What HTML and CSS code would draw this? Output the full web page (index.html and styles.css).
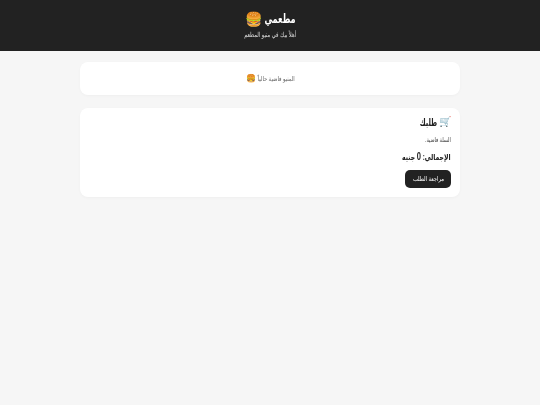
FILE: index.html
```html
<!DOCTYPE html>
<html lang="ar" dir="rtl">
<head>
<meta charset="utf-8">
<title>مطعمي</title>
<link rel="stylesheet" href="styles.css">
</head>
<body>
<header class="site-header">
  <h1 class="brand"><span class="squeeze brand-name">مطعمي</span><span class="emoji-lg">🍔</span></h1>
  <p class="tagline"><span class="squeeze">أهلاً بيك في منيو المطعم</span></p>
</header>
<main class="container">
  <section class="card menu-card">
    <p class="empty-menu"><span class="squeeze menu-text">المنيو فاضية حالياً</span><span class="emoji-sm">🍔</span></p>
  </section>
  <section class="card cart-card">
    <h2 class="cart-title"><span class="emoji-md">🛒</span><span class="squeeze cart-name">طلبك</span></h2>
    <p class="cart-empty"><span class="squeeze from-right">السلة فاضية.</span></p>
    <p class="total"><span class="squeeze from-right total-text">الإجمالي: <span class="num">0</span> جنيه</span></p>
    <button class="review" type="button"><span class="squeeze review-text">مراجعة الطلب</span></button>
  </section>
</main>
</body>
</html>
```

FILE: styles.css
```css
* { box-sizing: border-box; }
html, body { margin: 0; padding: 0; }
body {
  height: 405px;
  background: #f6f6f6;
  color: #222;
  font-family: "Liberation Sans", "Noto Sans", "DejaVu Sans", sans-serif;
  overflow: hidden;
}
.squeeze {
  display: inline-block;
  white-space: nowrap;
  transform: scaleX(0.74);
  filter: blur(0.2px);
}
.from-right { transform-origin: right center; }
.site-header {
  height: 51px;
  background: #222;
  color: #fff;
  display: flex;
  flex-direction: column;
  align-items: center;
  padding-top: 10px;
}
.brand {
  display: flex;
  align-items: center;
  gap: 3px;
  margin: 0;
  font-size: 12.500px;
  line-height: 18px;
  font-weight: 700;
}
.brand-name { margin: 0 -8.500px; transform: scaleX(0.65); }
.emoji-lg { font-size: 14px; }
.tagline {
  margin: 2px 0 0;
  font-size: 7px;
  line-height: 10px;
  color: #ddd;
}
.container {
  width: 380px;
  margin: 11px auto 0;
  display: flex;
  flex-direction: column;
  gap: 13px;
}
.card {
  background: #fff;
  border-radius: 8px;
  box-shadow: 0 1px 3px rgba(0, 0, 0, 0.03);
}
.menu-card {
  height: 33px;
  display: flex;
  align-items: center;
  justify-content: center;
}
.empty-menu {
  display: flex;
  align-items: center;
  gap: 2px;
  margin: 0;
  font-size: 6.500px;
  color: #666;
}
.menu-text { margin: 0 -5px; transform: scaleX(0.8); }
.emoji-sm { font-size: 8px; }
.cart-card {
  height: 89px;
  padding: 7px 9px 0;
  display: flex;
  flex-direction: column;
  align-items: flex-start;
}
.cart-title {
  display: flex;
  align-items: center;
  gap: 2px;
  margin: 0;
  font-size: 10.500px;
  line-height: 14px;
  font-weight: 700;
  color: #222;
}
.cart-name { margin-left: -10px; transform: scaleX(0.62); transform-origin: right center; }
.emoji-md { font-size: 10px; }
.cart-empty {
  margin: 6px 0 0;
  font-size: 6.500px;
  line-height: 9px;
  color: #444;
}
.total {
  margin: 6px 0 0;
  font-size: 8.500px;
  line-height: 13px;
  font-weight: 700;
}
.total-text { transform: scaleX(0.72); }
.num { font-size: 10.500px; }
.review {
  margin-top: 6px;
  width: 46px;
  height: 18px;
  padding: 0;
  border: 0;
  border-radius: 5px;
  background: #222;
  color: #fff;
  font: 6.500px "Liberation Sans", "Noto Sans", "DejaVu Sans", sans-serif;
}
.review-text { transform: scaleX(0.8); }
```
